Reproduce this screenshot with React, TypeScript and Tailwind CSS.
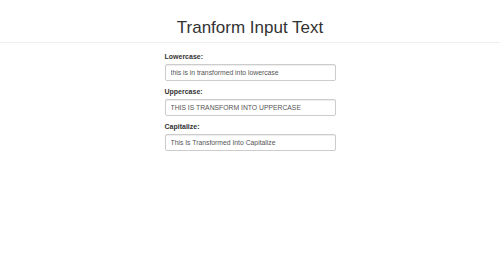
import { useState } from 'react';

const fields = [
  { id: 'lower', label: 'Lowercase:', value: 'this is in transformed into lowercase' },
  { id: 'upper', label: 'Uppercase:', value: 'THIS IS TRANSFORM INTO UPPERCASE' },
  { id: 'cap', label: 'Capitalize:', value: 'This Is Transformed Into Capitalize' },
];

export default function App() {
  const [values, setValues] = useState<Record<string, string>>(
    Object.fromEntries(fields.map(f => [f.id, f.value]))
  );

  return (
    <div className="min-h-[278px] bg-white text-[#333]" style={{ fontFamily: '"Liberation Sans", Arial, sans-serif' }}>
      {/* Header */}
      <div className="border-b border-[#eeeeee] pt-[18px] pb-[4px]">
        <h1 className="text-center text-[17px] leading-[20px] font-normal text-[#333]">Tranform Input Text</h1>
      </div>

      {/* Form */}
      <div className="mx-auto mt-[9px] w-[171px]">
        {fields.map(field => (
          <div key={field.id} className="mb-[6px]">
            <label htmlFor={field.id} className="block text-[7px] leading-[10px] font-bold text-[#333] mb-[1.5px]">
              {field.label}
            </label>
            <input
              id={field.id}
              value={values[field.id]}
              onChange={(e) => setValues({ ...values, [field.id]: e.target.value })}
              className="block w-full h-[17.5px] px-[5px] text-[6.8px] text-[#555] bg-white border border-[#cccccc] rounded-[2px] shadow-[inset_0_1px_1px_rgba(0,0,0,0.075)] outline-none"
            />
          </div>
        ))}
      </div>
    </div>
  );
}
